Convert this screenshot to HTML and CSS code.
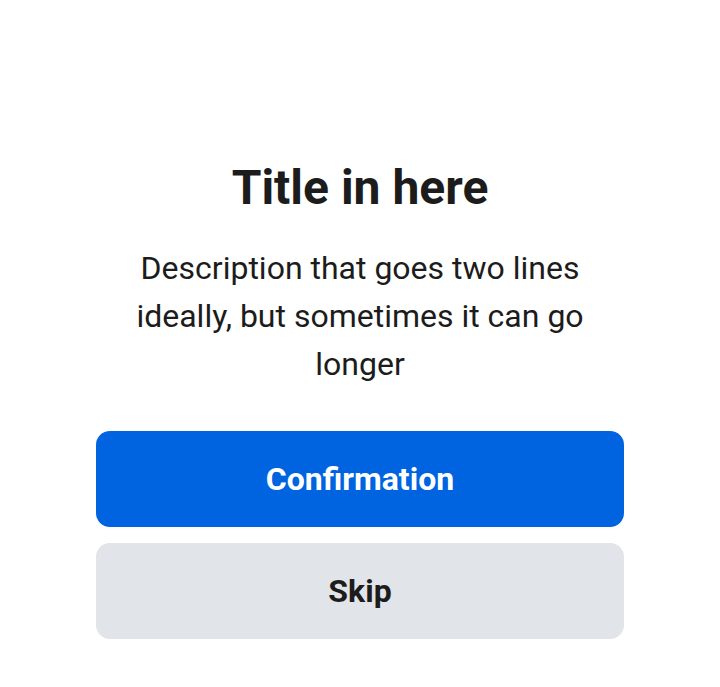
FILE: index.html
```html
<!DOCTYPE html>
<html>
<head>
<meta charset="utf-8">
<link rel="stylesheet" href="styles.css">
</head>
<body>
<main class="sheet">
  <h1 class="title">Title in here</h1>
  <p class="desc">Description that goes two lines ideally, but sometimes it can go longer</p>
  <div class="actions">
    <button class="btn btn-primary">Confirmation</button>
    <button class="btn btn-secondary">Skip</button>
  </div>
</main>
</body>
</html>
```
FILE: styles.css
```css
html, body {
  margin: 0;
  padding: 0;
  background: #ffffff;
}
body {
  font-family: Roboto, "Liberation Sans", sans-serif;
  color: #1c1c1c;
}
.sheet {
  width: 528px;
  margin: 0 auto;
  padding-top: 158px;
  display: flex;
  flex-direction: column;
  align-items: stretch;
  text-align: center;
}
.title {
  margin: 0;
  font-size: 48px;
  line-height: 60px;
  font-weight: 700;
}
.desc {
  margin: 26px 0 0;
  font-size: 32px;
  line-height: 48px;
  font-weight: 400;
}
.actions {
  margin-top: 43px;
  display: flex;
  flex-direction: column;
  gap: 16px;
}
.btn {
  height: 96px;
  border: none;
  border-radius: 14px;
  font-family: Roboto, "Liberation Sans", sans-serif;
  font-size: 32px;
  font-weight: 700;
  cursor: pointer;
}
.btn-primary {
  background: #0064e0;
  color: #ffffff;
}
.btn-secondary {
  background: #e1e4e9;
  color: #1c1c1c;
}
```
